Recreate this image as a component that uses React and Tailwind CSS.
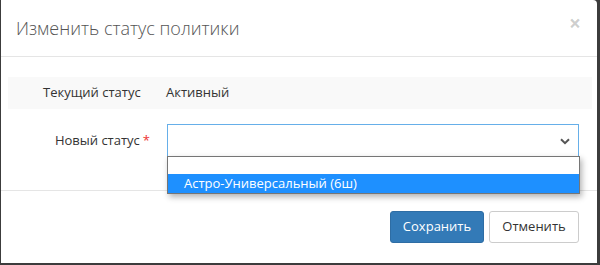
export default function App() {
  return (
    <div className="w-[600px] h-[265px] bg-[#3c3c3c] overflow-hidden" style={{ fontFamily: '"Open Sans", "Noto Sans", sans-serif' }}>
      <div className="relative ml-[1px] w-[596px] h-[263px] bg-white rounded-tr-[4px] flex flex-col">
        <div className="h-[57px] shrink-0 border-b border-[#e5e5e5] flex items-center justify-between pl-[15px] pr-[16px]">
          <div className="text-[18px] font-light text-[#555] leading-none -mt-[1px]">Изменить статус политики</div>
          <div className="text-[21px] font-bold text-black/20 leading-none -mt-[9px]">×</div>
        </div>
        <div className="h-[134px] shrink-0 border-b border-[#e5e5e5] pt-[20px] text-[13px] text-[#333]">
          <div className="ml-[7px] w-[584px] h-[32px] bg-[#f9f9f9] flex items-center">
            <span className="ml-[35px] w-[123px]">Текущий статус</span>
            <span>Активный</span>
          </div>
          <div className="mt-[15px] flex items-center">
            <div className="w-[166px] text-right pr-[17px]">
              <span>Новый статус</span>
              <span className="text-[#e33] ml-[3px]">*</span>
            </div>
            <div className="relative">
              <div className="w-[412px] h-[33px] border border-[#66afe9] bg-white flex items-center justify-end pr-[8px]">
                <svg width="10" height="7" viewBox="0 0 10 7" className="mt-[1px]">
                  <path d="M1 1.2 L5 5.2 L9 1.2" fill="none" stroke="#555" strokeWidth="2" />
                </svg>
              </div>
              <div className="absolute left-0 top-[32px] w-[413px] h-[38px] bg-white border border-[#767676] shadow-[2px_3px_6px_rgba(0,0,0,0.3)] z-10 flex flex-col">
                <div className="h-[17px]"></div>
                <div className="h-[19px] bg-[#1e90ff] text-white flex items-center pl-[16px] text-[13px]">Астро-Универсальный (6ш)</div>
              </div>
            </div>
          </div>
        </div>
        <div className="flex-1 flex justify-end items-start pt-[20px] pr-[18px] gap-[5px] text-[13px]">
          <button className="w-[94px] h-[32px] bg-[#337ab7] text-white rounded-[3px] border border-[#2e6da4]">Сохранить</button>
          <button className="w-[90px] h-[32px] bg-white text-[#333] rounded-[3px] border border-[#ccc]">Отменить</button>
        </div>
      </div>
    </div>
  );
}
